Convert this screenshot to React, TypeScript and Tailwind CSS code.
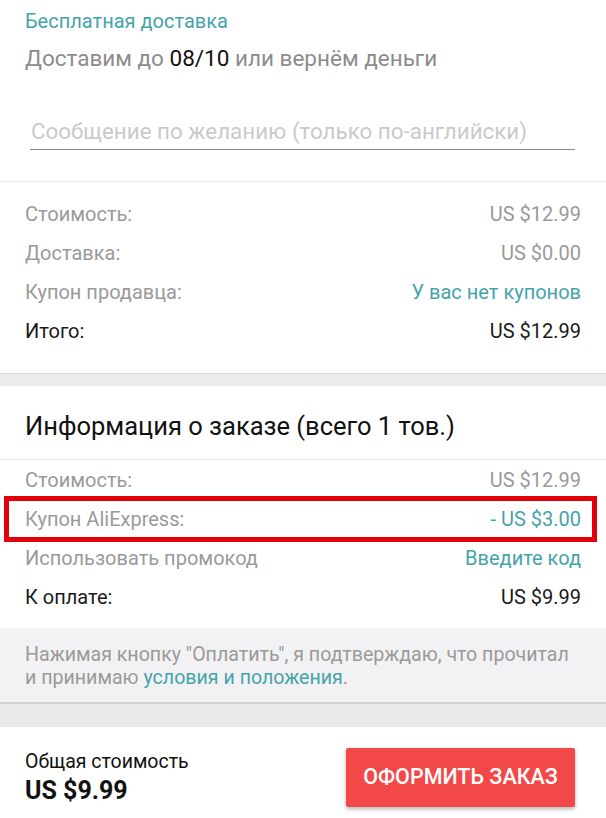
import React from 'react'

type Row = {
  label: string
  value: string
  tone?: 'muted' | 'link' | 'strong'
  highlight?: boolean
}

const SUMMARY: Row[] = [
  { label: 'Стоимость:', value: 'US $12.99', tone: 'muted' },
  { label: 'Доставка:', value: 'US $0.00', tone: 'muted' },
  { label: 'Купон продавца:', value: 'У вас нет купонов', tone: 'link' },
  { label: 'Итого:', value: 'US $12.99', tone: 'strong' },
]

const ORDER: Row[] = [
  { label: 'Стоимость:', value: 'US $12.99', tone: 'muted' },
  { label: 'Купон AliExpress:', value: '- US $3.00', tone: 'link', highlight: true },
  { label: 'Использовать промокод', value: 'Введите код', tone: 'link' },
  { label: 'К оплате:', value: 'US $9.99', tone: 'strong' },
]

const PriceRow = ({ row }: { row: Row }) => {
  const strong = row.tone === 'strong'
  return (
    <div className="relative h-[39px] flex items-center justify-between px-[25px] text-[20px]">
      <span className={strong ? 'text-[#1a1a1a]' : 'text-[#9a9a9a]'}>{row.label}</span>
      <span
        className={
          row.tone === 'link' ? 'text-[#45a4aa]' : strong ? 'text-[#1a1a1a]' : 'text-[#9a9a9a]'
        }
      >
        {row.value}
      </span>
      {row.highlight && (
        <div className="absolute left-[4px] right-[9px] top-[-3px] bottom-[-4px] border-[5px] border-[#e3000b] pointer-events-none" />
      )}
    </div>
  )
}

export default function App() {
  return (
    <div className="w-full h-[818px] overflow-hidden bg-white font-['Roboto',sans-serif]">
      {/* Delivery */}
      <div className="pt-[7px] border-b border-[#ececec]">
        <div className="px-[25px] text-[20px] leading-[28px] text-[#45a4aa]">Бесплатная доставка</div>
        <div className="mt-[9px] px-[25px] text-[22.5px] leading-[28px] text-[#8c8c8c]">
          Доставим до <span className="text-[#111]">08/10</span> или вернём деньги
        </div>
        <div className="mt-[45px] ml-[30px] mr-[31px] pb-[4px] border-b border-[#8a8a8a]">
          <div className="pl-[1px] text-[22.4px] leading-[28px] text-[#cacaca]">
            Сообщение по желанию (только по-английски)
          </div>
        </div>
        <div className="h-[31px]" />
      </div>

      {/* Seller summary */}
      <div className="pt-[12px] pb-[23px]">
        {SUMMARY.map((r, i) => (
          <PriceRow key={i} row={r} />
        ))}
      </div>
      <div className="h-[13px] border-t border-[#d4d4d4] bg-[#ebebeb]" />

      {/* Order info */}
      <div className="pt-[24px] pb-[17px] px-[25px] border-b border-[#ececec]">
        <h2 className="text-[25.5px] leading-[32px] text-[#111]">Информация о заказе (всего 1 тов.)</h2>
      </div>
      <div className="pb-[12px]">
        {ORDER.map((r, i) => (
          <PriceRow key={i} row={r} />
        ))}
      </div>

      {/* Terms */}
      <div className="bg-[#f2f1f3] pt-[15px] pb-[13px] px-[25px] text-[19.6px] leading-[23px] text-[#9a9a9a]">
        Нажимая кнопку "Оплатить", я подтверждаю, что прочитал
        <br />
        и принимаю <span className="text-[#45a4aa]">условия и положения</span>.
      </div>
      <div className="h-[25px] border-t-2 border-[#d2d2d2] bg-[#e9e9e9]" />

      {/* Footer */}
      <div className="flex justify-between pl-[25px] pr-[31px]">
        <div className="pt-[23px]">
          <div className="text-[19.5px] leading-[24px] text-[#111]">Общая стоимость</div>
          <div className="mt-[2px] text-[25px] leading-[30px] font-bold text-[#111]">US $9.99</div>
        </div>
        <div className="pt-[21px]">
          <button className="w-[229px] h-[59px] rounded-[2px] bg-[#f34848] text-white text-[21.5px] font-medium shadow-[0_2px_4px_rgba(0,0,0,0.3)]">
            ОФОРМИТЬ ЗАКАЗ
          </button>
        </div>
      </div>
    </div>
  )
}
